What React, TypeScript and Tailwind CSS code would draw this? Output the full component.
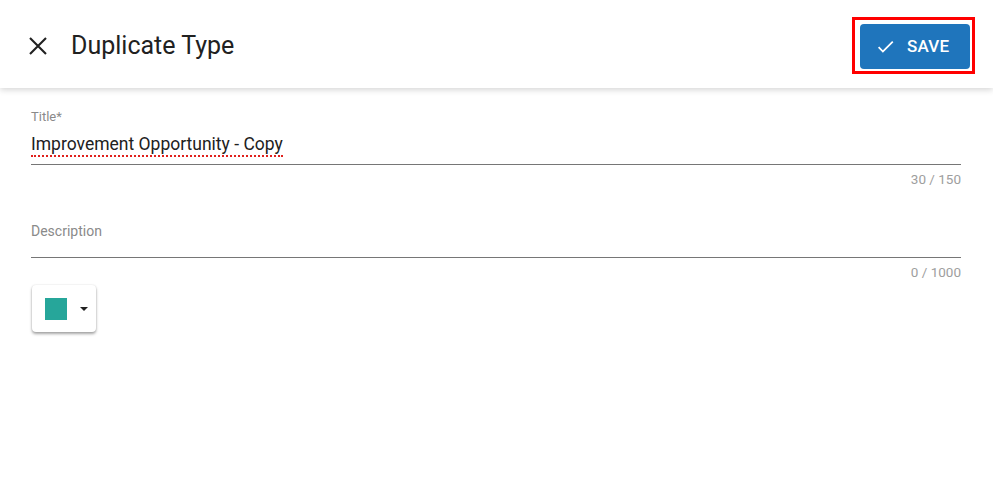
import React from "react";

function CloseIcon() {
  return (
    <svg width="18" height="18" viewBox="0 0 18 18" stroke="#212121" strokeWidth="2.1" fill="none">
      <path d="M1 1L17 17M17 1L1 17" />
    </svg>
  );
}

function CheckIcon() {
  return (
    <svg width="21" height="21" viewBox="0 0 24 24" fill="#ffffff">
      <path d="M9 16.17L4.83 12l-1.42 1.41L9 19 21 7l-1.41-1.41z" />
    </svg>
  );
}

export default function App() {
  return (
    <div
      className="w-[993px] h-[482px] bg-white overflow-hidden flex flex-col"
      style={{ fontFamily: "Roboto, 'Liberation Sans', sans-serif" }}
    >
      <header className="h-[88px] shrink-0 flex items-center justify-between pl-[29px] pr-[18px] bg-white shadow-[0_2px_6px_rgba(0,0,0,0.16)] relative z-10">
        <div className="flex items-center gap-[24px] mt-[4px]">
          <CloseIcon />
          <h1 className="text-[25px] leading-[28px] text-[#212121] font-normal">
            Duplicate Type
          </h1>
        </div>
        <div className="border-[3px] border-[#ff0000] pl-[5px] pt-[4px] pr-[2px] pb-[2px] mt-[3px]">
          <button className="w-[110px] h-[45px] rounded-[4px] bg-[#1f75bc] flex items-center pl-[15px] gap-[11px] text-white text-[17px] font-medium tracking-[0.2px]">
            <CheckIcon />
            SAVE
          </button>
        </div>
      </header>

      <main className="pl-[31px] pr-[32px] pt-[21px] flex flex-col">
        {/* title field */}
        <div className="border-b border-[#767676] flex flex-col">
          <span className="text-[13px] leading-[15px] text-[#8a8a8a] mb-[9px]">
            Title*
          </span>
          <div className="h-[31px] flex items-start">
            <span className="text-[17.5px] leading-[22px] text-[#212121] border-b-2 border-dotted border-[#e0201c]">
              Improvement Opportunity - Copy
            </span>
          </div>
        </div>
        <span className="self-end text-[13.5px] leading-[16px] text-[#9e9e9e] mt-[6px]">
          30 / 150
        </span>

        {/* description field */}
        <div className="border-b border-[#767676] flex flex-col mt-[36px]">
          <span className="text-[14px] leading-[16px] text-[#8a8a8a]">
            Description
          </span>
          <div className="h-[18px]" />
        </div>
        <span className="self-end text-[13.5px] leading-[16px] text-[#9e9e9e] mt-[6px]">
          0 / 1000
        </span>

        <div className="mt-[5px]">
          <button className="w-[64px] h-[47px] ml-[1px] rounded-[4px] bg-white shadow-[0_2px_3px_rgba(0,0,0,0.35),0_0_2px_rgba(0,0,0,0.12)] flex items-center pl-[13px] gap-[13px]">
            <span className="w-[22px] h-[22px] bg-[#26a69a]" />
            <svg width="8" height="4" viewBox="0 0 8 4" fill="#212121">
              <path d="M0 0h8L4 4z" />
            </svg>
          </button>
        </div>
      </main>
    </div>
  );
}
